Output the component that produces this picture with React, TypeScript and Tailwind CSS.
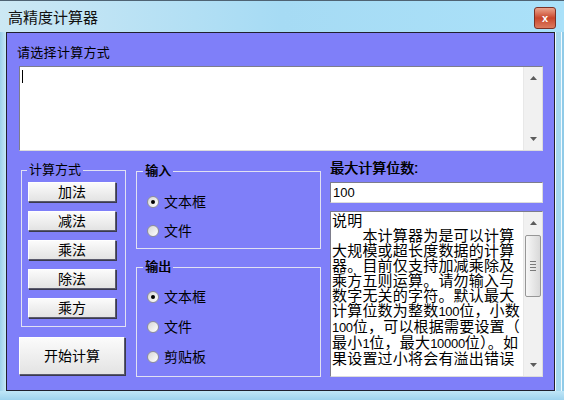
import React from "react";

// Small triangle used by the scroll bar buttons
const Arrow = ({ up }: { up?: boolean }) => (
  <svg width="7" height="4" viewBox="0 0 7 4">
    <path d={up ? "M0 4L3.5 0L7 4Z" : "M0 0L7 0L3.5 4Z"} fill="#5c5c5c" />
  </svg>
);

const ScrollBar = ({ thumb }: { thumb?: boolean }) => (
  <div className="flex w-[19px] flex-col border-l border-[#e8e8e8] bg-[#f1f1f1]">
    <div className="flex h-[22px] items-center justify-center">
      <Arrow up />
    </div>
    <div className="flex-1 px-[1px] pt-[1px]">
      {thumb && (
        <div className="flex h-[62px] flex-col items-center justify-center gap-[2px] rounded-[2px] border border-[#979797] bg-linear-to-r from-[#f7f7f7] to-[#d9d9d9]">
          <span className="h-[1px] w-[6px] bg-[#7a7a7a]" />
          <span className="h-[1px] w-[6px] bg-[#7a7a7a]" />
          <span className="h-[1px] w-[6px] bg-[#7a7a7a]" />
          <span className="h-[1px] w-[6px] bg-[#7a7a7a]" />
        </div>
      )}
    </div>
    <div className="flex h-[22px] items-center justify-center">
      <Arrow />
    </div>
  </div>
);

const WinButton = ({
  children,
  className,
}: {
  children: React.ReactNode;
  className?: string;
}) => (
  <button
    className={`flex items-center justify-center border border-t-white border-l-white border-b-[#5a5a6c] border-r-[#5a5a6c] bg-linear-to-b from-[#fbfbfb] to-[#e3e3e3] text-black shadow-[1px_1px_0_#3a3a4e] ${className}`}
  >
    {children}
  </button>
);

const Radio = ({ label, checked }: { label: string; checked?: boolean }) => (
  <div className="flex h-[16px] items-center gap-[5px]">
    <span className="flex h-[12px] w-[12px] items-center justify-center rounded-full border border-[#8e8f98] bg-linear-to-br from-[#d6d6d6] to-white">
      {checked && <span className="h-[4px] w-[4px] rounded-full bg-black" />}
    </span>
    <span className="text-[14px] leading-[16px]">{label}</span>
  </div>
);

const notes = [
  "说明",
  "　　本计算器为是可以计算",
  "大规模或超长度数据的计算",
  "器。目前仅支持加减乘除及",
  "乘方五则运算。请勿输入与",
  "数字无关的字符。默认最大",
  "计算位数为整数100位，小数",
  "100位，可以根据需要设置（",
  "最小1位，最大10000位）。如",
  "果设置过小将会有溢出错误",
];

// digits in the original font are narrow, so set them a little smaller
const NoteLine = ({ text }: { text: string }) => (
  <div className="whitespace-pre">
    {text.split(/(\d+)/).map((part, i) =>
      /^\d+$/.test(part) ? (
        <span key={i} className="text-[13px] tracking-[-0.3px]">
          {part}
        </span>
      ) : (
        <span key={i}>{part}</span>
      )
    )}
  </div>
);

const App = () => {
  return (
    <div className="flex h-[400px] w-[564px] flex-col overflow-hidden bg-[#b2ddf2] font-['Liberation_Sans','Noto_Sans_CJK_SC',sans-serif] text-black">
      {/* title bar */}
      <div className="flex h-[32px] items-start justify-between border-t border-[#4f6373] bg-linear-to-r from-[#cce8f4] via-[#a6dbf4] to-[#aae1f9]">
        <span className="ml-[8px] mt-[7px] text-[15px] leading-[20px] text-[#111]">
          高精度计算器
        </span>
        <div className="mr-[8px] mt-[6px] flex h-[22px] w-[22px] items-center justify-center rounded-[3px] border border-[#7b3226] bg-linear-to-b from-[#eaa48c] via-[#c8452a] to-[#dc7a5e]">
          <span className="text-[11px] font-bold leading-none text-white">x</span>
        </div>
      </div>

      <div className="flex">
        <div className="w-[6px] bg-linear-to-r from-[#9ccfea] to-[#c6e8f7]" />

        {/* client area */}
        <div className="flex h-[359px] w-[549px] flex-col border border-[#20202e] bg-[#7f7ff9]">
          <div className="ml-[10px] mt-[12px] text-[13px] leading-[16px] tracking-[0.3px]">
            请选择计算方式
          </div>
          <div className="ml-[12px] mt-[5px] flex h-[85px] w-[524px] border border-t-[#7d7d8c] border-l-[#7d7d8c] border-b-[#dcdcdc] border-r-[#dcdcdc] bg-white">
            <div className="flex-1 pl-[2px] pt-[3px]">
              <div className="h-[13px] w-[1px] bg-black" />
            </div>
            <ScrollBar />
          </div>

          <div className="ml-[12px] mt-[9px] flex">
            {/* operations */}
            <div className="flex w-[107px] flex-col">
              <fieldset className="ml-[2px] mt-[2px] h-[165px] w-[105px] border border-[#e1e1f3]">
                <legend className="ml-[5px] px-[2px] text-[13px] leading-[16px]">计算方式</legend>
                <div className="ml-[6px] mt-[4px] flex flex-col gap-[9px]">
                  <WinButton className="h-[20px] w-[88px] border-l-[#6c6c6c] text-[14px] leading-[16px]">加法</WinButton>
                  <WinButton className="h-[20px] w-[88px] text-[14px] leading-[16px]">减法</WinButton>
                  <WinButton className="h-[20px] w-[88px] text-[14px] leading-[16px]">乘法</WinButton>
                  <WinButton className="h-[20px] w-[88px] text-[14px] leading-[16px]">除法</WinButton>
                  <WinButton className="h-[20px] w-[88px] text-[14px] leading-[16px]">乘方</WinButton>
                </div>
              </fieldset>
              <WinButton className="mt-[10px] h-[38px] w-[106px] text-[14px] leading-[16px]">开始计算</WinButton>
            </div>

            {/* input / output */}
            <div className="ml-[10px] flex w-[185px] flex-col">
              <fieldset className="mt-[3px] h-[86px] border border-[#e1e1f3]">
                <legend className="ml-[6px] px-[2px] text-[13px] leading-[16px] [text-shadow:0.5px_0_0_#000]">输入</legend>
                <div className="ml-[10px] mt-[15px] flex flex-col gap-[13px]">
                  <Radio label="文本框" checked />
                  <Radio label="文件" />
                </div>
              </fieldset>
              <fieldset className="mt-[10px] h-[118px] border border-[#e1e1f3]">
                <legend className="ml-[6px] px-[2px] text-[13px] leading-[16px] [text-shadow:0.5px_0_0_#000]">输出</legend>
                <div className="ml-[10px] mt-[14px] flex flex-col gap-[14px]">
                  <Radio label="文本框" checked />
                  <Radio label="文件" />
                  <Radio label="剪贴板" />
                </div>
              </fieldset>
            </div>

            {/* settings and notes */}
            <div className="ml-[9px] flex w-[213px] flex-col">
              <div className="text-[14px] leading-[16px] [text-shadow:0.5px_0_0_#000]">最大计算位数:</div>
              <div className="mt-[6px] flex h-[21px] items-center border border-t-[#7d7d8c] border-l-[#7d7d8c] border-b-[#dcdcdc] border-r-[#dcdcdc] bg-white pl-[2px] text-[13px]">
                100
              </div>
              <div className="mt-[8px] flex h-[166px] border border-t-[#7d7d8c] border-l-[#7d7d8c] border-b-[#dcdcdc] border-r-[#dcdcdc] bg-white">
                <div className="flex-1 overflow-hidden pl-[1px] pt-[1px] text-[15px] leading-[15px] tracking-[0.2px]">
                  {notes.map((line, i) => (
                    <NoteLine key={i} text={line} />
                  ))}
                </div>
                <ScrollBar thumb />
              </div>
            </div>
          </div>
        </div>

        <div className="flex w-[9px]">
          <div className="w-[1px] bg-[#eef9fe]" />
          <div className="flex-1 bg-[#a4d7ef]" />
          <div className="w-[1px] bg-[#f2fbff]" />
          <div className="w-[2px] bg-[#8fcbe8]" />
        </div>
      </div>

      <div className="flex-1 bg-linear-to-b from-[#bfe6f7] to-[#9ed3ee]" />
    </div>
  );
};

export default App;
